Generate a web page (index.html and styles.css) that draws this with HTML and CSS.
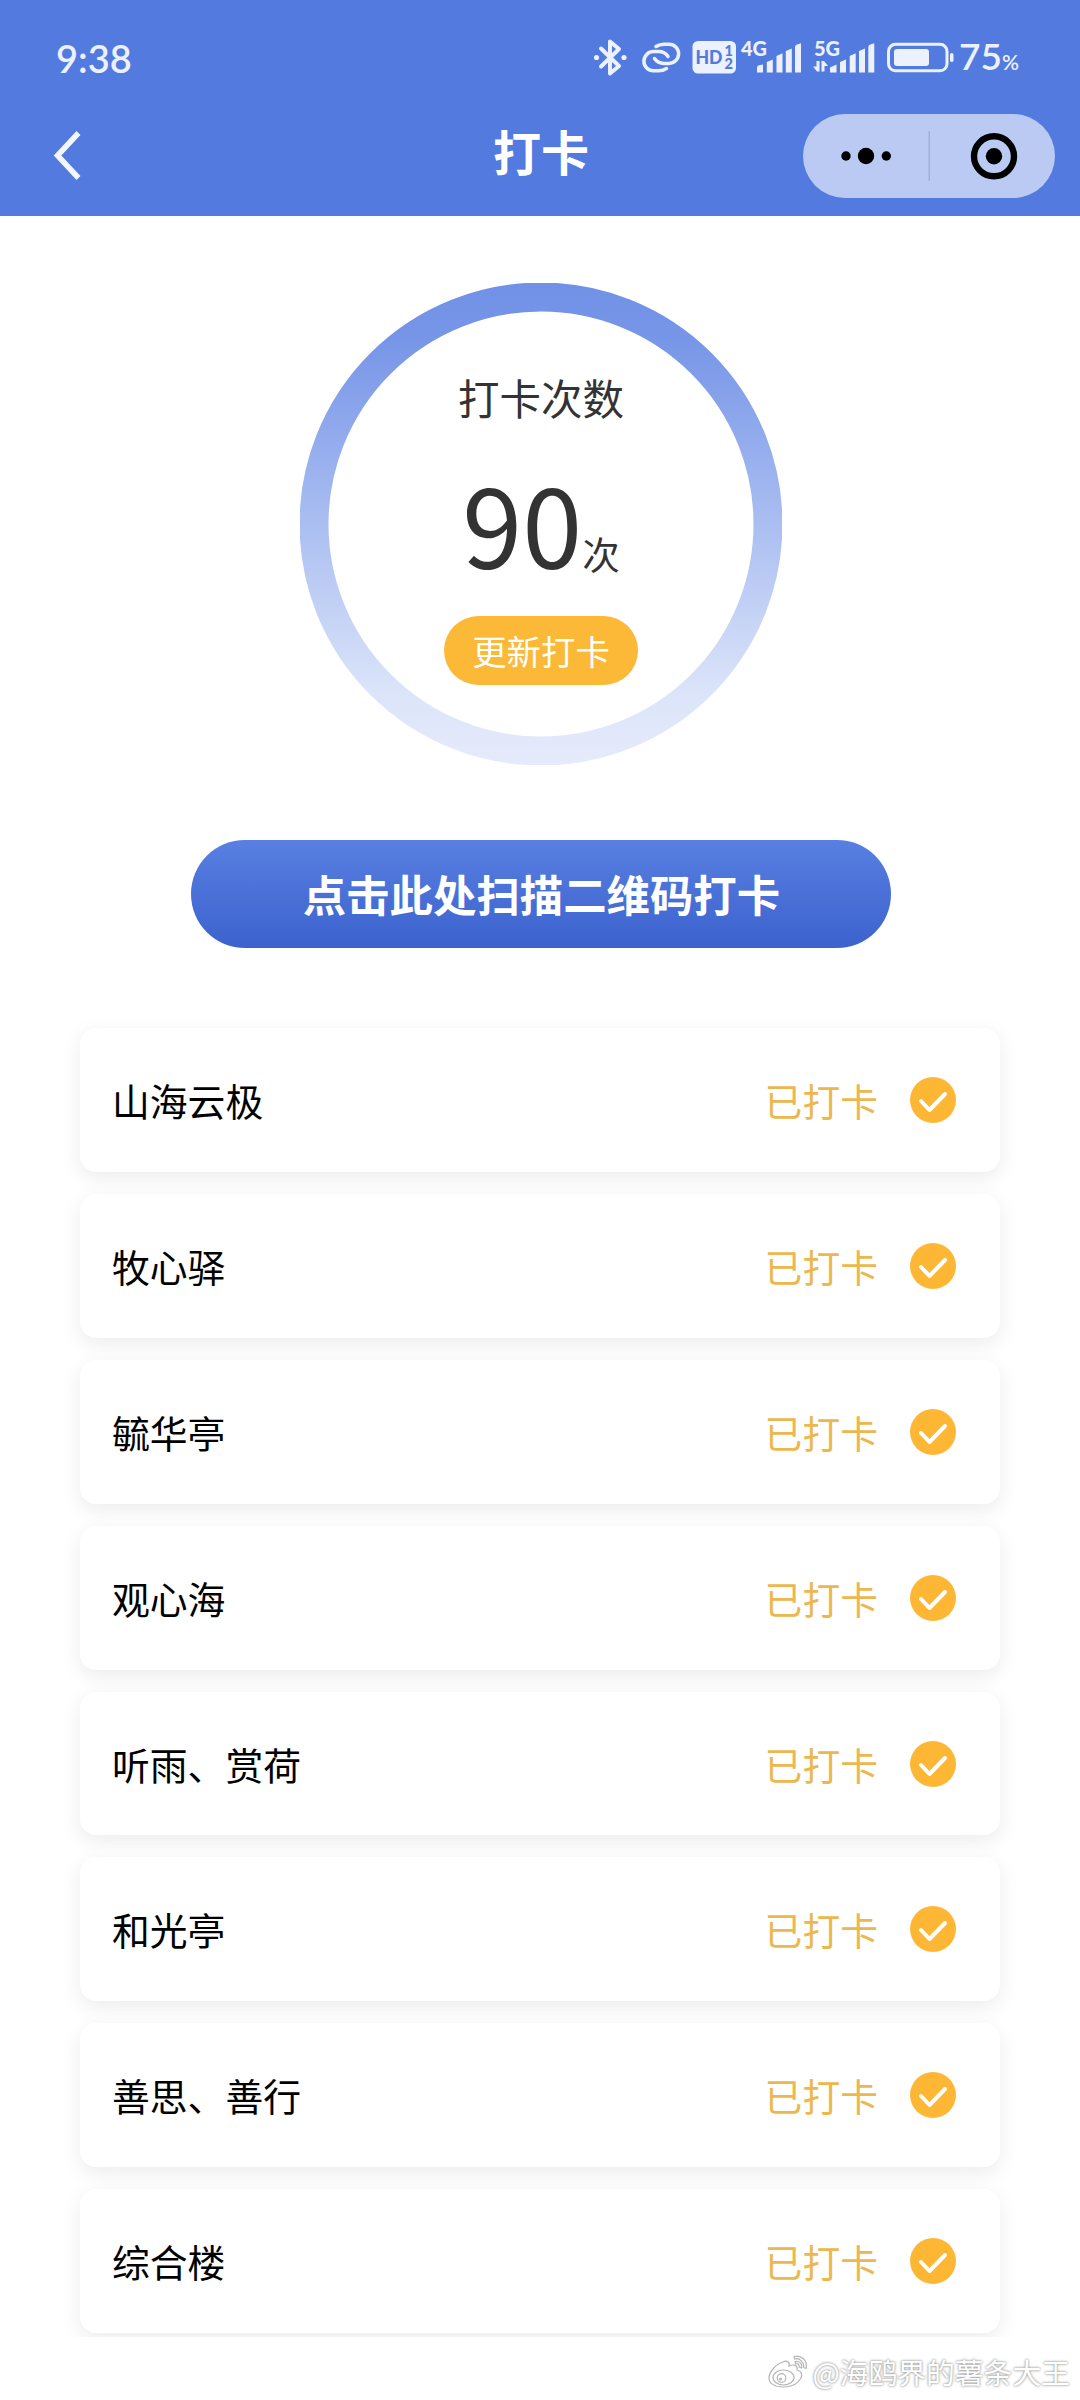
FILE: index.html
```html
<!DOCTYPE html>
<html lang="zh-CN">
<head>
<meta charset="utf-8">
<title>打卡</title>
<link rel="stylesheet" href="styles.css">
</head>
<body>
<header class="header">
  <div class="status">
    <span class="time">9:38</span>
    <svg class="status-icons" width="376" height="50" viewBox="586 32 376 50">
      <g fill="none" stroke="#ebf1fe" stroke-width="4" stroke-linejoin="round" stroke-linecap="round">
        <path d="M601 48.500 L619 66 L610 73.500 V41.500 L619 49 L601 66.500"/>
        <path d="M656 46.500C658.500 44.800 661 44.200 664 44.200H669A9.600 9.600 0 0 1 669 63.400H664C659.500 63.400 656.500 61.500 654.500 58.500" stroke-width="3.500"/>
        <path d="M666.500 68.500C664 70.200 661.500 70.800 658.500 70.800H653.500A9.600 9.600 0 0 1 653.500 51.600H658.500C663 51.600 666 53.500 668 56.500" stroke-width="3.500"/>
      </g>
      <g fill="#ebf1fe">
        <circle cx="596.500" cy="57.500" r="2.600"/><circle cx="624" cy="57.500" r="2.600"/>
        <rect x="692.500" y="41" width="43.500" height="32.500" rx="5.500"/>
        <path d="M757 72.500V67.500q0-2 2-2.300l4-.7v8zM766.800 72.500V62l6-2.500v13zM776.500 72.500V56l6-2.700v19.200zM785.800 72.500V51l6-2.500v24zM795 72.500V47q0-1.800 2-2.500l4-1.300v29.300z"/>
        <path d="M830 72.500V67.500l6.500-3v8zM840 72.500V62l6-2.500v13zM849.700 72.500V56l6-2.700v19.200zM859 72.500V51l6-2.500v24zM868.300 72.500V47q0-1.800 2-2.500l4-1.300v29.300z"/>
        <path d="M816.500 61h3v10.500h-2.500l-4-5h3.500zM821.500 71.500V61h2.500l4 5h-3.500v5.500z"/>
        <rect x="894" y="49" width="35" height="17" rx="3"/>
        <rect x="950" y="53" width="3.500" height="9" rx="1.700"/>
      </g>
      <rect x="888.500" y="44.300" width="58.500" height="26.500" rx="7" fill="none" stroke="#ebf1fe" stroke-width="3"/>
      <g class="status-label">
        <text x="695.500" y="64.300" font-size="19" textLength="27" lengthAdjust="spacingAndGlyphs" fill="#527adf">HD</text>
        <text x="724.500" y="55.800" font-size="14.500" fill="#527adf">1</text>
        <text x="724.500" y="69.300" font-size="14.500" fill="#527adf">2</text>
        <text x="741" y="56.200" font-size="20" textLength="26" lengthAdjust="spacingAndGlyphs">4G</text>
        <text x="814" y="56.200" font-size="20" textLength="26" lengthAdjust="spacingAndGlyphs">5G</text>
      </g>
    </svg>
    <span class="battery">75<small>%</small></span>
  </div>
  <div class="nav">
    <svg class="back" width="32" height="56" viewBox="0 0 32 56"><path d="M28.500 5 7.500 27.500 28.500 50" fill="none" stroke="#f3f6fe" stroke-width="5.500"/></svg>
    <h1 class="title">打卡</h1>
    <div class="capsule">
      <svg width="252" height="84" viewBox="0 0 252 84">
        <circle cx="43" cy="42" r="4.700"/><circle cx="63" cy="42" r="8.200"/><circle cx="83.300" cy="42" r="4.700"/>
        <path d="M126.200 17v50" stroke="#9aabdb" stroke-width="1.200"/>
        <circle cx="191" cy="42.300" r="20" fill="none" stroke="#000" stroke-width="6.400"/><circle cx="191" cy="42.300" r="8.200"/>
      </svg>
    </div>
  </div>
</header>
<main class="content">
  <section class="ring">
    <svg class="ring-art" width="482" height="482" viewBox="0 0 482 482">
      <defs><linearGradient id="fade" gradientUnits="userSpaceOnUse" x1="0" y1="0" x2="0" y2="482"><stop offset="0" stop-color="#7091e7"/><stop offset=".12" stop-color="#7896e8"/><stop offset=".5" stop-color="#aabef1"/><stop offset=".85" stop-color="#dbe4f9"/><stop offset="1" stop-color="#e6ebfb"/></linearGradient></defs>
      <circle cx="241" cy="241" r="227" fill="none" stroke="url(#fade)" stroke-width="29"/>
    </svg>
    <div class="ring-label">打卡次数</div>
    <div class="count">90<span class="unit">次</span></div>
    <button class="refresh">更新打卡</button>
  </section>
  <button class="scan">点击此处扫描二维码打卡</button>
  <ul class="places">
    <li class="place"><span>山海云极</span><span class="done">已打卡</span><svg class="check" viewBox="0 0 46 46"><circle cx="23" cy="23" r="23"/><path d="m11 24 8.500 9L35 17"/></svg></li>
    <li class="place"><span>牧心驿</span><span class="done">已打卡</span><svg class="check" viewBox="0 0 46 46"><circle cx="23" cy="23" r="23"/><path d="m11 24 8.500 9L35 17"/></svg></li>
    <li class="place"><span>毓华亭</span><span class="done">已打卡</span><svg class="check" viewBox="0 0 46 46"><circle cx="23" cy="23" r="23"/><path d="m11 24 8.500 9L35 17"/></svg></li>
    <li class="place"><span>观心海</span><span class="done">已打卡</span><svg class="check" viewBox="0 0 46 46"><circle cx="23" cy="23" r="23"/><path d="m11 24 8.500 9L35 17"/></svg></li>
    <li class="place"><span>听雨、赏荷</span><span class="done">已打卡</span><svg class="check" viewBox="0 0 46 46"><circle cx="23" cy="23" r="23"/><path d="m11 24 8.500 9L35 17"/></svg></li>
    <li class="place"><span>和光亭</span><span class="done">已打卡</span><svg class="check" viewBox="0 0 46 46"><circle cx="23" cy="23" r="23"/><path d="m11 24 8.500 9L35 17"/></svg></li>
    <li class="place"><span>善思、善行</span><span class="done">已打卡</span><svg class="check" viewBox="0 0 46 46"><circle cx="23" cy="23" r="23"/><path d="m11 24 8.500 9L35 17"/></svg></li>
    <li class="place"><span>综合楼</span><span class="done">已打卡</span><svg class="check" viewBox="0 0 46 46"><circle cx="23" cy="23" r="23"/><path d="m11 24 8.500 9L35 17"/></svg></li>
  </ul>
</main>
<footer class="watermark">
  <svg width="42" height="38" viewBox="0 0 42 38" fill="#fff" stroke="#b5b5b5" stroke-width="1.200">
    <path d="M15 9c4-2 7 0 6 4 5-2 9-1 8 4 4 1 6 4 4 8-3 6-10 9-18 9C6 34 1 30 1 25 1 19 8 11 15 9z"/>
    <ellipse cx="15.500" cy="24.500" rx="10.500" ry="7.500"/><circle cx="13.500" cy="25" r="4.300"/><circle cx="12.500" cy="26" r="1"/>
    <path d="M26 3.500c7-2 14 4 12 12l-2.500-1c1-5-4-10-9-8.500zM27 8.500c4-1 7.500 2 6.500 6.500l-2.300-.8c.5-2.500-1.500-4-3.700-3.500z"/>
  </svg>
  <span>@海鸥界的薯条大王</span>
</footer>
</body>
</html>
```
FILE: styles.css
```css
* { box-sizing: border-box; }
body {
  margin: 0;
  width: 1080px;
  height: 2400px;
  overflow: hidden;
  background: #fff;
  color: #000;
  font-family: "Noto Sans CJK SC", sans-serif;
}
button { border: 0; padding: 0; font-family: inherit; color: #fff; }

.header { height: 216px; background: #527adf; }
.status {
  display: flex;
  align-items: center;
  height: 114px;
  padding: 0 57px 0 56px;
  color: #ebf1fe;
  font-family: Lato, sans-serif;
}
.time { padding-top: 2px; font-size: 38px; font-weight: 600; line-height: 50px; width: 530px; }
.status-icons { flex: none; }
.status-label { font-family: Lato, sans-serif; font-weight: 900; fill: #ebf1fe; }
.battery { padding-top: 4px; font-size: 37px; font-weight: 600; line-height: 50px; margin-left: -3px; white-space: nowrap; }
.battery small { font-size: 21px; }

.nav {
  display: grid;
  grid-template-columns: 1fr auto 1fr;
  align-items: center;
  height: 84px;
  padding: 0 25px 0 50px;
}
.title {
  margin: 0;
  padding: 0 23px 12px 0;
  font-size: 48px;
  line-height: 70px;
  font-weight: 700;
  color: #fff;
}
.capsule {
  justify-self: end;
  width: 252px;
  height: 84px;
  border-radius: 42px;
  background: #bacaf3;
}
.capsule svg { display: block; }

.content { display: flex; flex-direction: column; align-items: center; }
.ring {
  position: relative;
  display: flex;
  flex-direction: column;
  align-items: center;
  width: 482px;
  height: 482px;
  margin: 67px 0 0 2px;
  color: #333;
}
.ring-art { position: absolute; inset: 0; }
.ring-label { margin-top: 84px; font-size: 41.500px; line-height: 60px; }
.count { margin-top: 17px; font-size: 108px; line-height: 156px; height: 156px; white-space: nowrap; }
.unit { font-size: 37.500px; }
.refresh {
  margin-top: 16px;
  width: 194px;
  height: 69px;
  border-radius: 35px;
  background: #fcb837;
  font-size: 34.400px;
  line-height: 69px;
}
.scan {
  width: 700px;
  height: 108px;
  margin: 75px 0 0 2px;
  padding: 0 0 2px 1px;
  border-radius: 54px;
  background: linear-gradient(#587fe1, #3c62ce);
  font-size: 43.400px;
  line-height: 106px;
  font-weight: 700;
}

.places {
  display: flex;
  flex-direction: column;
  gap: 22px;
  width: 1080px;
  height: 1337px;
  margin: 52px 0 0;
  padding: 28px 80px 0;
  list-style: none;
  overflow: hidden;
}
.place {
  display: flex;
  flex: none;
  align-items: center;
  height: 143.900px;
  padding: 0 44px 0 32px;
  border-radius: 16px;
  background: #fff;
  box-shadow: 0 6px 20px rgba(0, 0, 0, .08);
  font-size: 37.800px;
  line-height: 56px;
}
.done { margin-left: auto; color: #ecb74e; }
.check { width: 46px; height: 46px; margin-left: 32px; fill: #fdb735; }
.check path { fill: none; stroke: #fff; stroke-width: 4; stroke-linecap: round; stroke-linejoin: round; }

.watermark {
  display: flex;
  align-items: center;
  justify-content: flex-end;
  gap: 2px;
  height: 63px;
  padding: 7px 10px 0 0;
  color: #fff;
  font-size: 28.800px;
  line-height: 44px;
  text-shadow: 0 0 3px #999, 0 0 2px #aaa;
}
```
